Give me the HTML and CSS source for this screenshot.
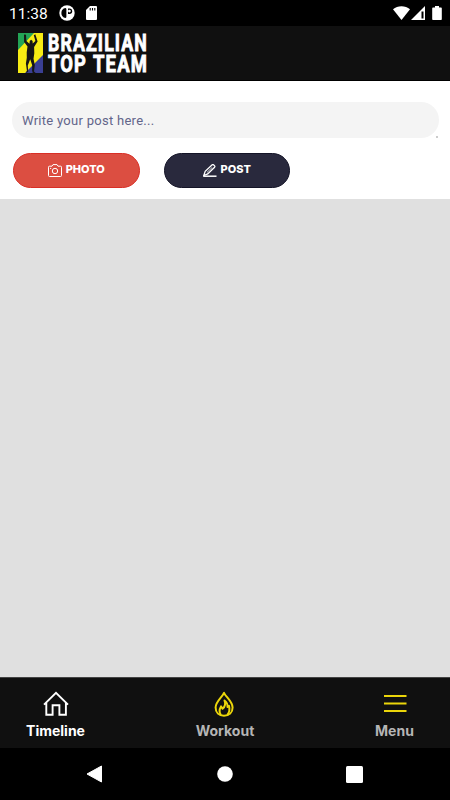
FILE: index.html
```html
<!DOCTYPE html>
<html lang="en">
<head>
  <meta charset="UTF-8">
  <meta name="viewport" content="width=device-width, initial-scale=1.0">
  <title>Brazilian Top Team</title>
  <link rel="stylesheet" href="styles.css">
</head>
<body>
  <div class="status-bar">
    <span class="clock">11:38</span>
    <svg class="status-app" width="16" height="16" viewBox="0 0 16 16">
      <circle cx="8" cy="8" r="7.7" fill="#fff"/>
      <path d="M6.500 3a5.100 5.100 0 0 0 0 10c.6-.3.9-.8.9-1.600V4.600c0-.8-.3-1.300-.9-1.600z" fill="#000"/>
      <path d="M9 3.500h1.500a2.700 2.700 0 0 1 0 5.400H9z" fill="#000"/>
      <circle cx="10.400" cy="6.100" r="1.400" fill="#fff"/>
    </svg>
    <svg class="status-card" width="11" height="14" viewBox="0 0 11 14">
      <path d="M4 0h6a1 1 0 0 1 1 1v12a1 1 0 0 1-1 1H1a1 1 0 0 1-1-1V4z" fill="#fff"/>
      <path d="M4.200 2v2.500M6.500 2v2.500M8.800 2v2.500" stroke="#000" stroke-width="1.100"/>
    </svg>
    <svg class="status-right" width="50" height="15" viewBox="0 0 50 15">
      <path d="M1 3.300a13 13 0 0 1 17 0L9.500 14z" fill="#fff"/>
      <path d="M19 14L33 0v14z" fill="#fff"/>
      <path d="M29.500 5.500h2v7h-2z" fill="#000"/>
      <path d="M41 1.400h2V0h4v1.400h2a.8.8 0 0 1 .8.8v11a.8.8 0 0 1-.8.8h-8a.8.8 0 0 1-.8-.8v-11a.8.8 0 0 1 .8-.8z" fill="#fff"/>
    </svg>
  </div>

  <header class="header">
    <svg class="logo" width="132" height="42" viewBox="0 0 132 42">
      <path d="M1 1h25v40H1z" fill="#f7ec13"/>
      <path d="M1 1h16L1 18z" fill="#23a455"/>
      <path d="M26 23v18H8z" fill="#3a3f94"/>
      <path d="M7 2.500l2 .2.4 6.300 3.100 2.700.2-2.700 1.400-1.200 1.500 1.100.1 2.700 2.700-2.700-1.600-5.600 1.500-1 2.300 7.200-3.500 5.400.2 6.300-.8 5.600 1.300 6.100-.8 6.600 2 1.700h-3.200l-.7-2.400.1-5.600-2-6-2.400 6.300.4 6.200L9 41l.9-2.400-1-7 .9-5.800-.1-5.300.8-6.100-3.400-4.300z" fill="#161616"/>
      <g class="logo-text">
        <text x="31" y="18.800" textLength="100" lengthAdjust="spacingAndGlyphs">BRAZILIAN</text>
        <text x="31" y="40.400" textLength="39" lengthAdjust="spacingAndGlyphs">TOP</text>
        <text x="76" y="40.400" textLength="55" lengthAdjust="spacingAndGlyphs">TEAM</text>
      </g>
    </svg>
  </header>

  <main class="main">
    <form class="post-form">
      <div class="post-field">
        <textarea class="post-input" rows="1" placeholder="Write your post here..."></textarea>
      </div>
      <div class="post-actions">
        <button type="button" class="button button-photo">
          <svg width="14" height="13" viewBox="0 0 14 13" fill="none" stroke="#fff" stroke-width="1">
            <path d="M4 2.200L5 .6h4l1 1.600h2.500a1 1 0 0 1 1 1v8.300a1 1 0 0 1-1 1h-11a1 1 0 0 1-1-1V3.200a1 1 0 0 1 1-1z"/>
            <circle cx="7" cy="7" r="2.700"/>
            <path d="M2 4.400h1.200"/>
          </svg>
          <span>PHOTO</span>
        </button>
        <button type="button" class="button button-post">
          <svg width="14" height="13" viewBox="0 0 14 13" fill="none" stroke="#fff">
            <path d="M.8 11.500l1.400-4.200L9.200.8a1 1 0 0 1 1.300 0l1.100 1.100a1 1 0 0 1 0 1.300L4.700 9.900z" stroke-width="1.300"/>
            <path d="M4 8.400l5.200-5" stroke-width=".8"/>
            <path d="M.3 12.200h13.200" stroke-width="1.500"/>
          </svg>
          <span>POST</span>
        </button>
      </div>
    </form>
  </main>

  <nav class="tabs">
    <a class="tab active">
      <svg width="26" height="26" viewBox="0 0 26 26" fill="none" stroke="#fff" stroke-width="1.900">
        <path d="M1 13.600L13 1.900l12 11.700M3.300 11.600v12.200h6.300v-9.600h6.800v9.600h6.500V11.600"/>
      </svg>
      <span>Timeline</span>
    </a>
    <a class="tab">
      <svg width="26" height="26" viewBox="0 0 26 26" fill="none" stroke="#ebd50a" stroke-width="2" stroke-linejoin="round">
        <path d="M12 1.800C10.400 6 3.600 10.600 3.600 16.400c0 5.200 3.400 8.300 8.400 8.300s8.600-3.100 8.600-8.300C20.600 10.600 13.800 6 12 1.800z"/>
        <path d="M8.900 24.100c-2.400-3.600-1.300-6.400.1-8.700l1.500 2.400c2.600-2.200 3.300-5 2-8.300 2.500 1.700 3.200 3.800 3 6.500l1.500-1.200c1 3.800.6 6.500-1.700 9.200"/>
      </svg>
      <span>Workout</span>
    </a>
    <a class="tab">
      <svg width="26" height="26" viewBox="0 0 26 26" stroke="#ebd50a" stroke-width="2">
        <path d="M2 5h22.500M2 12.500h22.500M2 20h22.500"/>
      </svg>
      <span>Menu</span>
    </a>
  </nav>

  <div class="android-nav">
    <svg width="17" height="18" viewBox="0 0 17 18"><path d="M15.500 1v16L1 9z" fill="#fff" stroke="#fff" stroke-linejoin="round"/></svg>
    <svg width="16" height="16" viewBox="0 0 16 16"><circle cx="8" cy="8" r="7.800" fill="#fff"/></svg>
    <svg width="17" height="17" viewBox="0 0 17 17"><rect width="17" height="17" rx="1.500" fill="#fff"/></svg>
  </div>
</body>
</html>
```
FILE: styles.css
```css
* {
  box-sizing: border-box;
}
body {
  display: flex;
  flex-direction: column;
  height: 100vh;
  margin: 0;
  overflow: hidden;
  background-color: #e0e0e0;
  font-family: Roboto, Arial, sans-serif;
}
svg {
  display: block;
  flex-shrink: 0;
}
.status-bar {
  display: flex;
  align-items: center;
  height: 26px;
  padding: 0 8px 0 9px;
  background-color: #000;
  color: #fff;
}
.clock {
  width: 50px;
  font-size: 15.500px;
  line-height: 26px;
  padding-top: 2px;
}
.status-card {
  margin-left: 11px;
}
.status-right {
  margin-left: auto;
}
.header {
  height: 55px;
  padding: 6px 0 0 17px;
  background-color: #101010;
  border-bottom: 1px solid #000;
}
.logo {
  overflow: visible;
}
.logo-text {
  fill: #fff;
  stroke: #fff;
  stroke-width: .9px;
  font-family: Roboto, Arial, sans-serif;
  font-size: 24px;
  font-weight: 700;
  letter-spacing: 1.500px;
}
.main {
  flex: 1;
}
.post-form {
  height: 118px;
  padding: 21px 11px 0 12px;
  background-color: #fff;
}
.post-field {
  position: relative;
}
/* resize grip in the corner of the field */
.post-field::after {
  content: "";
  position: absolute;
  right: 1px;
  bottom: 0;
  width: 2px;
  height: 2px;
  background-color: #ccc;
}
.post-input {
  display: block;
  width: 100%;
  height: 36px;
  padding: 10px 10px 8px;
  border: 0;
  border-radius: 18px;
  outline: 0;
  overflow: hidden;
  resize: none;
  background-color: #f4f4f4;
  font-family: Roboto, Arial, sans-serif;
  font-size: 13px;
  line-height: 18px;
  letter-spacing: .28px;
}
.post-input::placeholder {
  color: #62658a;
  opacity: 1;
}
.post-actions {
  display: flex;
  gap: 24px;
  margin-top: 15px;
  padding-left: 1px;
}
.button {
  display: flex;
  align-items: center;
  justify-content: center;
  gap: 4px;
  width: 126.500px;
  height: 35px;
  padding: 0 0 3px;
  border: 1px solid #d92f26;
  border-radius: 18px;
  color: #fff;
  font-family: Inter, Arial, sans-serif;
  font-size: 11px;
  font-weight: 800;
}
.button svg {
  margin-top: 2px;
}
.button-photo {
  background-color: #dc4e41;
}
.button-post {
  background-color: #29293d;
  border-color: #141427;
}
.tabs {
  display: grid;
  grid-template-columns: 111px 1fr 111px;
  height: 71px;
  padding-top: 13px;
  background-color: #101010;
  border-top: 1px solid #444;
}
.tab {
  display: flex;
  flex-direction: column;
  align-items: center;
  gap: 5px;
  color: #b5b5b5;
  font-family: Inter, Arial, sans-serif;
  font-size: 14px;
  font-weight: 700;
  line-height: 18px;
}
.tab.active {
  color: #fff;
}
.android-nav {
  display: flex;
  align-items: center;
  justify-content: space-between;
  height: 52px;
  padding: 0 87px 0 86px;
  background-color: #000;
}
```
